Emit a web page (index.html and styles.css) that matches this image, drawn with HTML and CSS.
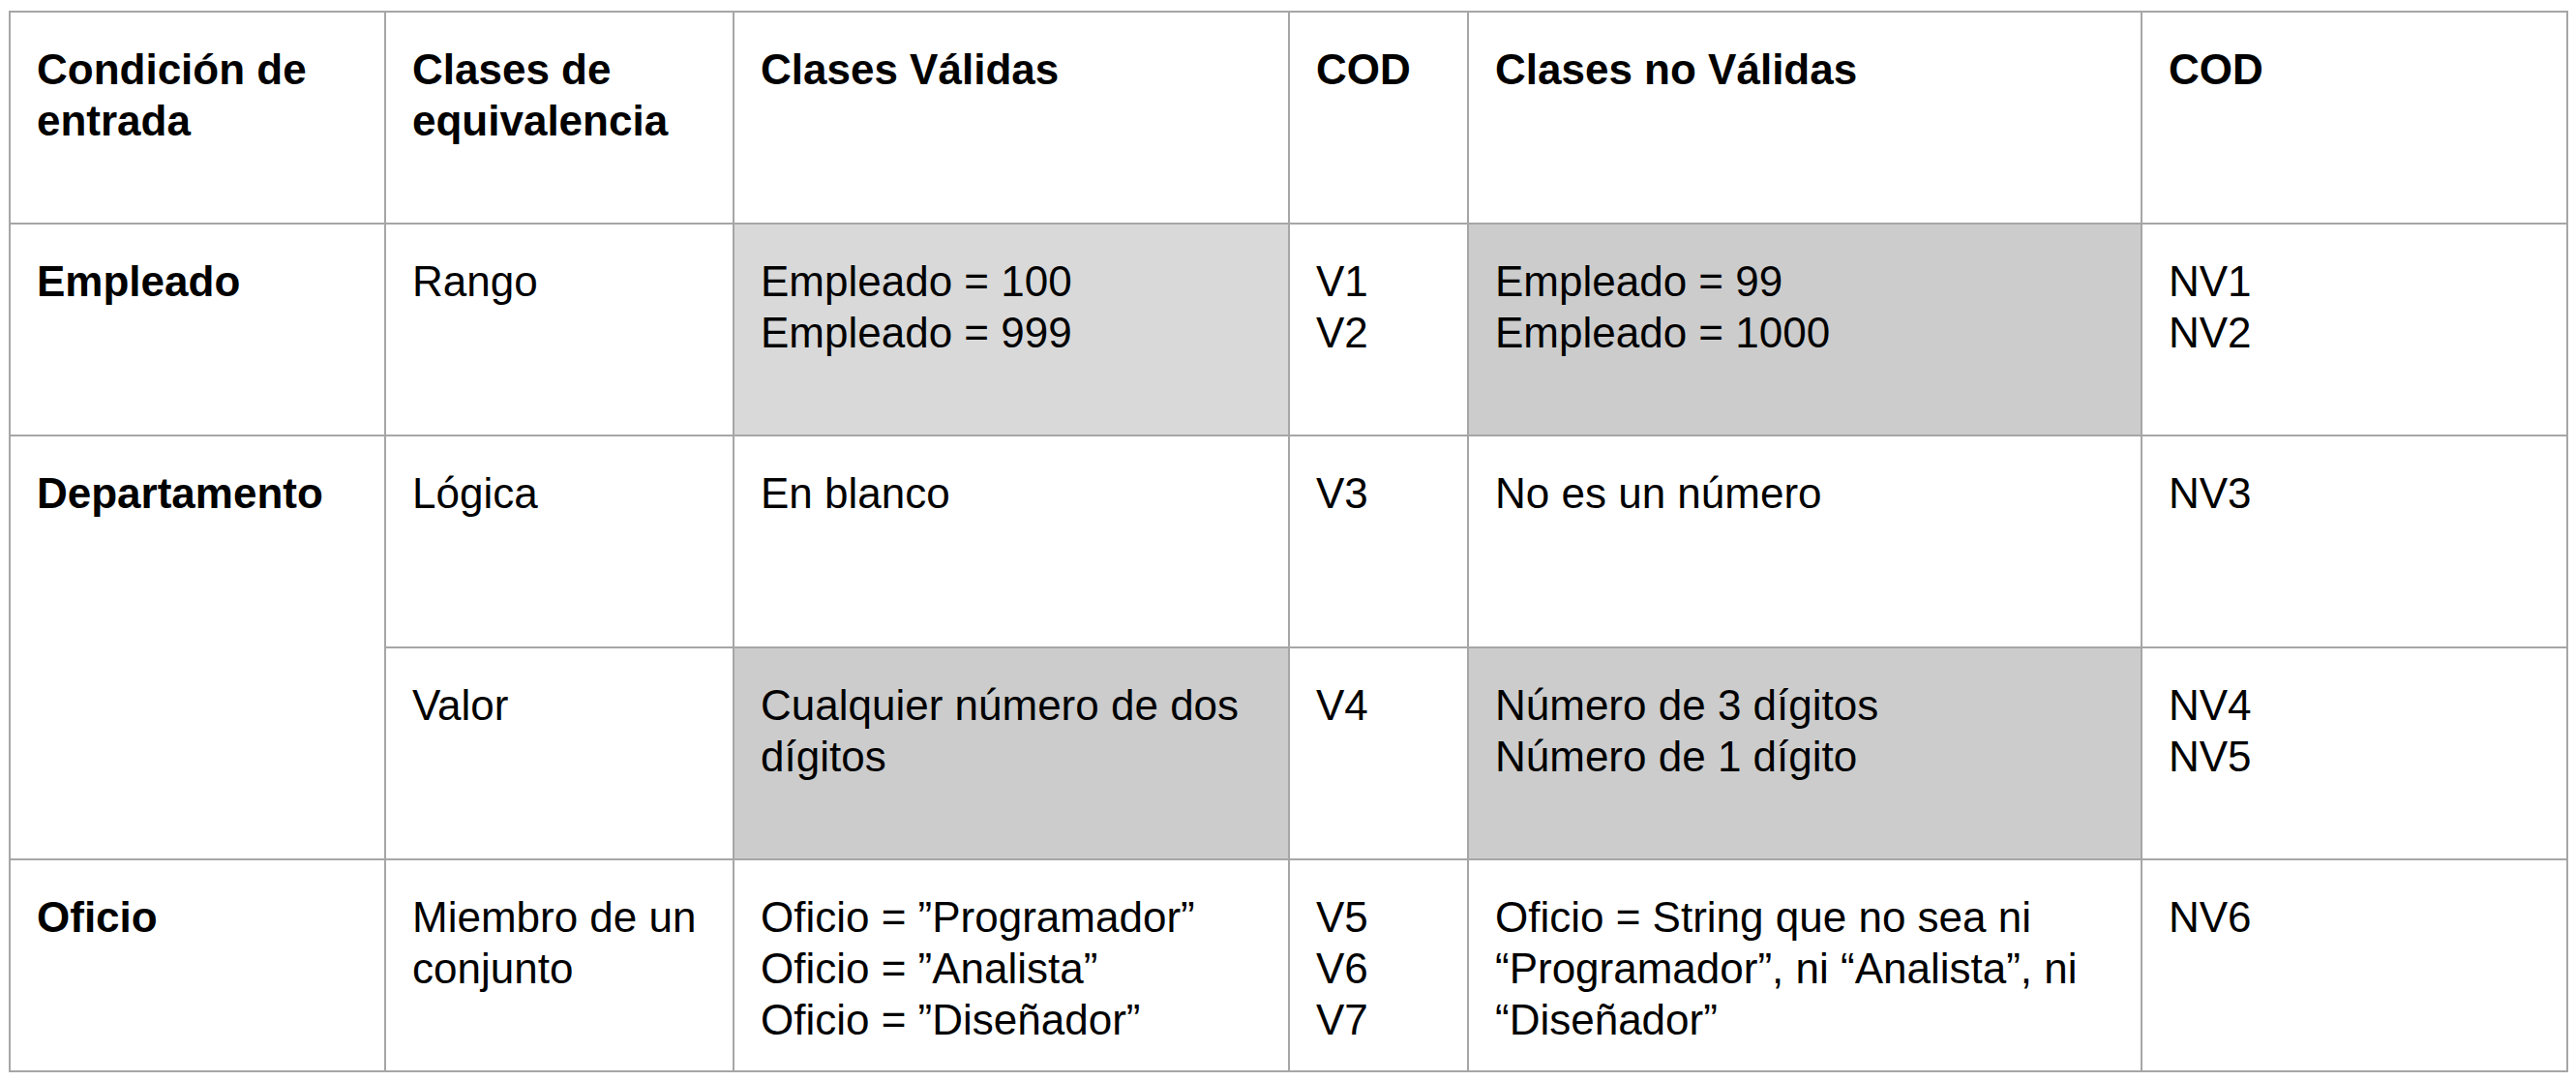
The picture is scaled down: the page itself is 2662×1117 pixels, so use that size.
FILE: index.html
```html
<!DOCTYPE html>
<html lang="es">
<head>
<meta charset="utf-8">
<title>Clases de equivalencia</title>
<link rel="stylesheet" href="styles.css">
</head>
<body>
<table class="eq-table">
  <colgroup>
    <col class="c1"><col class="c2"><col class="c3"><col class="c4"><col class="c5"><col class="c6">
  </colgroup>
  <tr>
    <th>Condición de entrada</th>
    <th>Clases de equivalencia</th>
    <th>Clases Válidas</th>
    <th>COD</th>
    <th>Clases no Válidas</th>
    <th>COD</th>
  </tr>
  <tr>
    <th>Empleado</th>
    <td>Rango</td>
    <td class="shade-light">Empleado = 100<br>Empleado = 999</td>
    <td>V1<br>V2</td>
    <td class="shade">Empleado = 99<br>Empleado = 1000</td>
    <td>NV1<br>NV2</td>
  </tr>
  <tr>
    <th rowspan="2">Departamento</th>
    <td>Lógica</td>
    <td>En blanco</td>
    <td>V3</td>
    <td>No es un número</td>
    <td>NV3</td>
  </tr>
  <tr>
    <td>Valor</td>
    <td class="shade">Cualquier número de dos dígitos</td>
    <td>V4</td>
    <td class="shade">Número de 3 dígitos<br>Número de 1 dígito</td>
    <td>NV4<br>NV5</td>
  </tr>
  <tr>
    <th>Oficio</th>
    <td>Miembro de un conjunto</td>
    <td>Oficio = ”Programador”<br>Oficio = ”Analista”<br>Oficio = ”Diseñador”</td>
    <td>V5<br>V6<br>V7</td>
    <td>Oficio = String que no sea ni “Programador”, ni “Analista”, ni “Diseñador”</td>
    <td>NV6</td>
  </tr>
</table>
</body>
</html>
```

FILE: styles.css
```css
html, body {
  margin: 0;
  padding: 0;
  background: #ffffff;
}

body {
  padding: 11px 0 0 9px;
  font-family: "Liberation Sans", Arial, sans-serif;
  color: #000000;
}

.eq-table {
  border-collapse: collapse;
  table-layout: fixed;
  width: 2645px;
}

.c1 { width: 388px; }
.c2 { width: 360px; }
.c3 { width: 574px; }
.c4 { width: 185px; }
.c5 { width: 696px; }
.c6 { width: 440px; }

.eq-table tr {
  height: 219px;
}

.eq-table th,
.eq-table td {
  border: 2px solid #a6a6a6;
  padding: 32px 27px 26px 27px;
  vertical-align: top;
  text-align: left;
  font-size: 44px;
  line-height: 53px;
}

.eq-table th {
  font-weight: bold;
}

.eq-table td {
  font-weight: normal;
}

.shade-light {
  background: #d9d9d9;
}

.shade {
  background: #cccccc;
}
```
